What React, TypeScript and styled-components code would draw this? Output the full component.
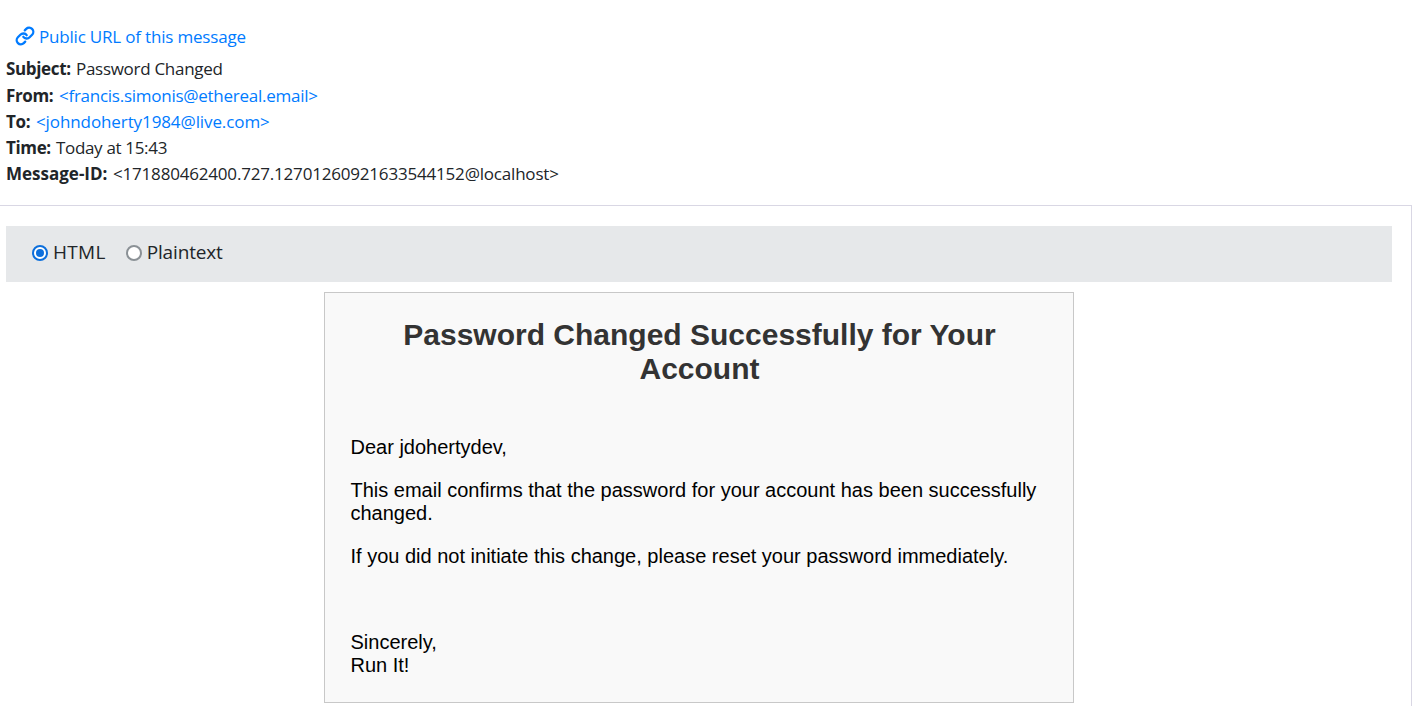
import React from 'react';
import styled, { createGlobalStyle } from 'styled-components';
import { FiLink } from 'react-icons/fi';

const GlobalStyle = createGlobalStyle`
  html, body { margin: 0; background: #fff; overflow: hidden; }
  * { box-sizing: border-box; }
`;

const Page = styled.main`
  display: flex;
  flex-direction: column;
  width: 1412px;
  height: 706px;
  overflow: hidden;
  padding-top: 21px;
  color: #212529;
  font: 17px/26px 'Segoe UI', 'Open Sans', sans-serif;
`;

const PublicLink = styled.a`
  display: flex;
  align-items: center;
  height: 32px;
  gap: 4px;
  padding-left: 15px;
  color: #007bff;
  svg { width: 20px; height: 20px; margin-top: -3px; stroke-width: 2.8; }
`;

const Track = styled.span<{ $s?: number }>`
  letter-spacing: ${p => p.$s ?? 0}px;
  white-space: pre;
`;

const Details = styled.dl`
  margin: 3px 0 0 6px;
`;

const Detail = styled.div<{ $h?: number }>`
  display: flex;
  height: ${p => p.$h ?? 26}px;
`;

const Label = styled.dt<{ $w: number; $s?: number }>`
  width: ${p => p.$w}px;
  font-weight: 700;
  white-space: nowrap;
  letter-spacing: ${p => p.$s ?? 0}px;
`;

const Value = styled.dd<{ $link?: boolean }>`
  margin: 0;
  color: ${p => (p.$link ? '#007bff' : 'inherit')};
`;

const Pane = styled.section`
  flex: 1;
  margin-top: 18px;
  padding: 20px 19px 0 6px;
  border: solid #d9d7e4;
  border-width: 1px 1px 0 0;
`;

const Formats = styled.div`
  display: flex;
  align-items: center;
  gap: 20px;
  height: 56px;
  padding: 0 26px 4px;
  background: #e6e8ea;
  font-size: 19px;
`;

const Option = styled.label`
  display: flex;
  align-items: center;
  gap: 5px;
`;

const Radio = styled.span<{ $on?: boolean }>`
  display: grid;
  place-items: center;
  width: 16px;
  height: 16px;
  margin-top: 1px;
  border: 2px solid ${p => (p.$on ? '#0d6fdc' : '#8b9196')};
  border-radius: 50%;
  background: #fff;
  &::after {
    content: '';
    width: 8px;
    height: 8px;
    border-radius: 50%;
    background: ${p => (p.$on ? '#0d6fdc' : 'transparent')};
  }
`;

const Card = styled.article`
  width: 750px;
  height: 411px;
  margin: 10px auto 0;
  padding: 25px 24.5px 25px 25.5px;
  border: 1px solid #c8c8c8;
  background: #f9f9f9;
  color: #000;
  font: 20px/23px 'Liberation Sans', Arial, sans-serif;
`;

const Title = styled.h1`
  margin: 0 0 50px;
  color: #333;
  text-align: center;
  font-size: 30px;
  line-height: 34px;
`;

const Text = styled.p<{ $gap?: number }>`
  margin: 0 0 ${p => p.$gap ?? 20}px;
`;

export default function App() {
  return (
    <Page>
      <GlobalStyle />
      <PublicLink><FiLink /><Track $s={-0.19}>Public URL of this message</Track></PublicLink>
      <Details>
        <Detail $h={27}><Label $w={70} $s={-0.35}>Subject:</Label><Value><Track $s={-0.29}>Password Changed</Track></Value></Detail>
        <Detail><Label $w={53} $s={-0.4}>From:</Label><Value $link><Track $s={-0.26}>&lt;francis.simonis@ethereal.email&gt;</Track></Value></Detail>
        <Detail><Label $w={30} $s={-0.3}>To:</Label><Value $link><Track $s={-0.1}>&lt;johndoherty1984@live.com&gt;</Track></Value></Detail>
        <Detail><Label $w={50} $s={-0.35}>Time:</Label><Value><Track $s={-0.33}>Today at 15:43</Track></Value></Detail>
        <Detail><Label $w={107}>Message-ID:</Label><Value><Track $s={-0.19}>&lt;171880462400.727.12701260921633544152@localhost&gt;</Track></Value></Detail>
      </Details>
      <Pane>
        <Formats>
          <Option><Radio $on /><Track $s={0.3}>HTML</Track></Option>
          <Option><Radio /><Track $s={-0.15}>Plaintext</Track></Option>
        </Formats>
        <Card>
          <Title>Password Changed Successfully for Your Account</Title>
          <Text>Dear jdohertydev,</Text>
          <Text>This email confirms that the password for your account has been successfully changed.</Text>
          <Text $gap={63}>If you did not initiate this change, please reset your password immediately.</Text>
          <Text>Sincerely,<br />Run It!</Text>
        </Card>
      </Pane>
    </Page>
  );
}
